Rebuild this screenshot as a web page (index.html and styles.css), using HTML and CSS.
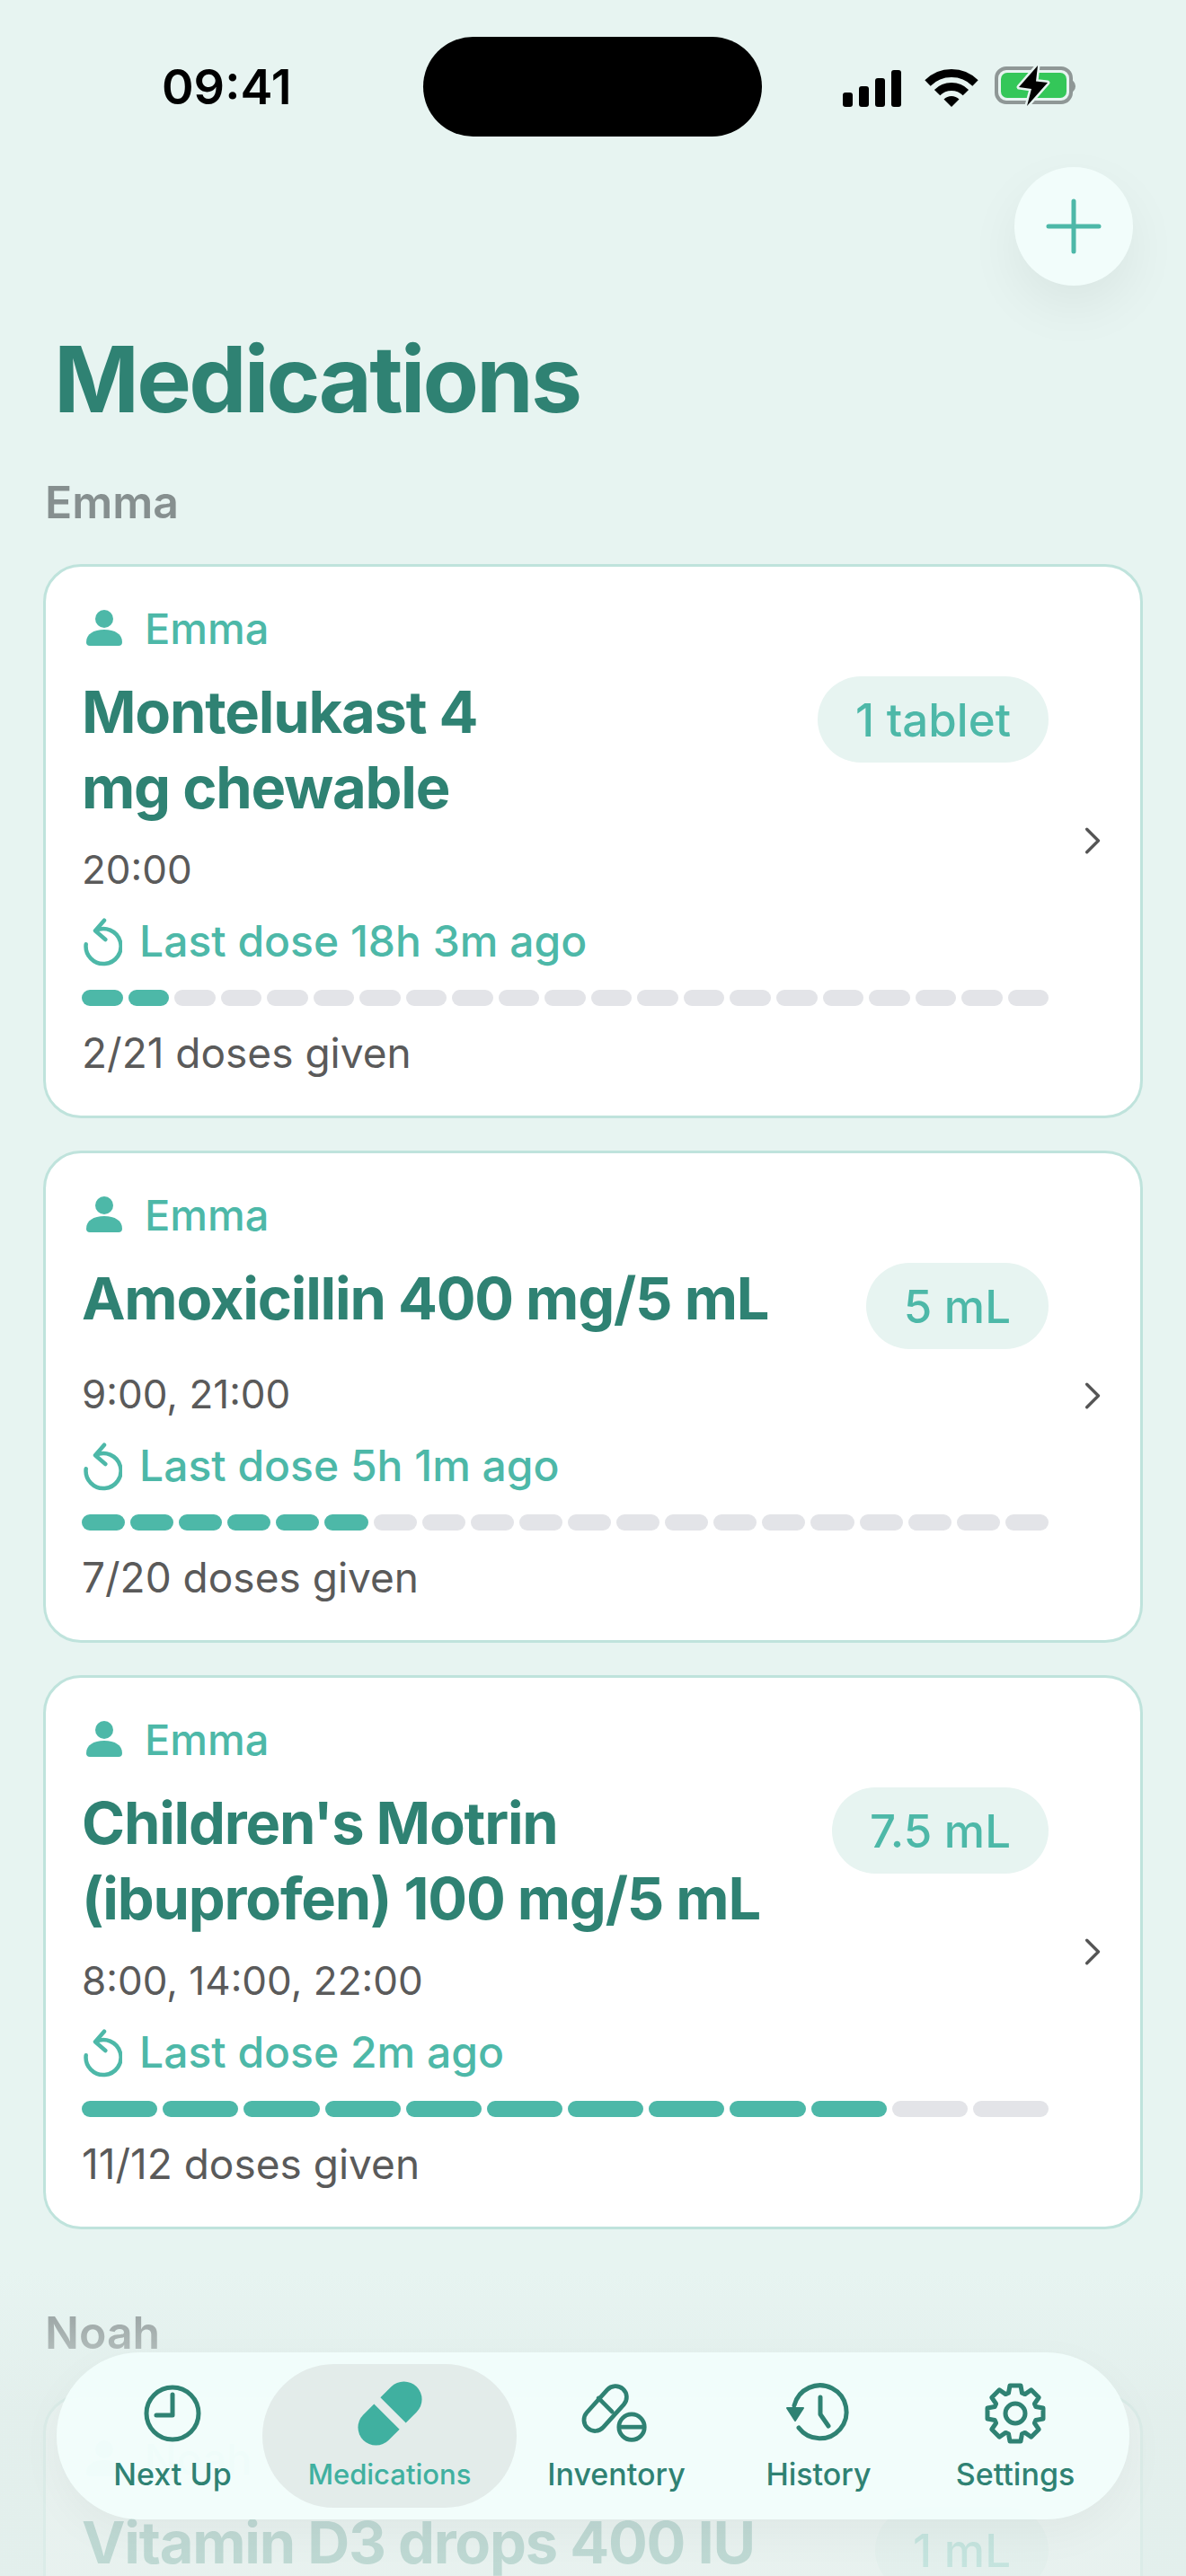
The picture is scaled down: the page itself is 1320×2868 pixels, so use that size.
FILE: index.html
```html
<!DOCTYPE html>
<html lang="en">
  <head>
    <meta charset="UTF-8" />
    <meta name="viewport" content="width=device-width, initial-scale=1.0" />
    <title>Medications</title>
    <link rel="stylesheet" href="styles.css">
  </head>

  <body>
    <div class="screen">
      <!-- Status Bar -->
      <div class="status-bar">
        <div class="status-time">09:41</div>
        <div class="island"></div>
        <div class="status-icons">
          <svg class="icon-signal" viewBox="0 0 65 41">
            <rect x="0" y="25" width="11" height="16" rx="3" />
            <rect x="18" y="18" width="11" height="23" rx="3" />
            <rect x="36" y="9" width="11" height="32" rx="3" />
            <rect x="54" y="0" width="11" height="41" rx="3" />
          </svg>
          <svg class="icon-wifi" viewBox="0 0 66 47">
            <path d="M6.5 20.5A37.5 37.5 0 0 1 59.5 20.5" fill="none" stroke="#000" stroke-width="9" />
            <path d="M17.1 31.1A22.5 22.5 0 0 1 48.9 31.1" fill="none" stroke="#000" stroke-width="9" />
            <path d="M33 47L24.5 38.5A12 12 0 0 1 41.5 38.5Z" fill="#000" />
          </svg>
          <svg class="icon-battery" viewBox="0 0 100 52">
            <rect x="8" y="7" width="83" height="38" rx="11" fill="none" stroke="#8f9796" stroke-width="4" />
            <rect x="13" y="12" width="73" height="28" rx="7" fill="#34c759" />
            <path d="M93 23a6 6 0 0 1 0 8z" fill="#8f9796" stroke="#8f9796" stroke-width="3" />
            <path d="M54 4L33 28L47 30L42 49L65 23L52 21.5Z" fill="#000" stroke="#e7f4f1" stroke-width="5" paint-order="stroke" stroke-linejoin="round" />
          </svg>
        </div>
      </div>

      <!-- Add Button -->
      <div class="add-row">
        <div class="add-button">
          <svg viewBox="0 0 56 56" class="icon-plus">
            <path d="M28 0V56M0 28H56" stroke="#4db8a8" stroke-width="5" stroke-linecap="round" />
          </svg>
        </div>
      </div>

      <h1 class="page-title">Medications</h1>

      <!-- Emma -->
      <div class="section-name">Emma</div>
      <div class="card-list">
        <div class="card">
          <div class="card-body">
            <div class="person">
              <svg class="icon-person" viewBox="0 0 40 40"><circle cx="20" cy="10" r="10" /><path d="M0 36C0 27 8 22 20 22S40 27 40 36C40 38.500 38.500 40 36 40H4C1.500 40 0 38.500 0 36Z" /></svg>
              <span>Emma</span>
            </div>
            <div class="med-row">
              <div class="med-name med-name-narrow">Montelukast 4 mg chewable</div>
              <div class="dose-pill">1 tablet</div>
            </div>
            <div class="schedule">20:00</div>
            <div class="last-dose">
              <svg class="icon-last" viewBox="0 0 46 58"><path d="M16 18.300A19.500 19.500 0 1 1 5.700 33.300M26 6.700L16 18.300L27.300 28" /></svg>
              <span>Last dose 18h 3m ago</span>
            </div>
            <div class="progress">
              <i class="seg on"></i><i class="seg on"></i><i class="seg"></i><i class="seg"></i><i class="seg"></i><i class="seg"></i><i class="seg"></i>
              <i class="seg"></i><i class="seg"></i><i class="seg"></i><i class="seg"></i><i class="seg"></i><i class="seg"></i><i class="seg"></i>
              <i class="seg"></i><i class="seg"></i><i class="seg"></i><i class="seg"></i><i class="seg"></i><i class="seg"></i><i class="seg"></i>
            </div>
            <div class="doses-given">2/21 doses given</div>
          </div>
          <svg class="chevron" viewBox="0 0 20 34"><path d="M2 2L17 17L2 32" /></svg>
        </div>

        <div class="card">
          <div class="card-body">
            <div class="person">
              <svg class="icon-person" viewBox="0 0 40 40"><circle cx="20" cy="10" r="10" /><path d="M0 36C0 27 8 22 20 22S40 27 40 36C40 38.500 38.500 40 36 40H4C1.500 40 0 38.500 0 36Z" /></svg>
              <span>Emma</span>
            </div>
            <div class="med-row">
              <div class="med-name">Amoxicillin 400 mg/5 mL</div>
              <div class="dose-pill">5 mL</div>
            </div>
            <div class="schedule">9:00, 21:00</div>
            <div class="last-dose">
              <svg class="icon-last" viewBox="0 0 46 58"><path d="M16 18.300A19.500 19.500 0 1 1 5.700 33.300M26 6.700L16 18.300L27.300 28" /></svg>
              <span>Last dose 5h 1m ago</span>
            </div>
            <div class="progress">
              <i class="seg on"></i><i class="seg on"></i><i class="seg on"></i><i class="seg on"></i><i class="seg on"></i><i class="seg on"></i><i class="seg"></i>
              <i class="seg"></i><i class="seg"></i><i class="seg"></i><i class="seg"></i><i class="seg"></i><i class="seg"></i><i class="seg"></i>
              <i class="seg"></i><i class="seg"></i><i class="seg"></i><i class="seg"></i><i class="seg"></i><i class="seg"></i>
            </div>
            <div class="doses-given">7/20 doses given</div>
          </div>
          <svg class="chevron" viewBox="0 0 20 34"><path d="M2 2L17 17L2 32" /></svg>
        </div>

        <div class="card">
          <div class="card-body">
            <div class="person">
              <svg class="icon-person" viewBox="0 0 40 40"><circle cx="20" cy="10" r="10" /><path d="M0 36C0 27 8 22 20 22S40 27 40 36C40 38.500 38.500 40 36 40H4C1.500 40 0 38.500 0 36Z" /></svg>
              <span>Emma</span>
            </div>
            <div class="med-row">
              <div class="med-name">Children's Motrin (ibuprofen) 100 mg/5 mL</div>
              <div class="dose-pill">7.5 mL</div>
            </div>
            <div class="schedule">8:00, 14:00, 22:00</div>
            <div class="last-dose">
              <svg class="icon-last" viewBox="0 0 46 58"><path d="M16 18.300A19.500 19.500 0 1 1 5.700 33.300M26 6.700L16 18.300L27.300 28" /></svg>
              <span>Last dose 2m ago</span>
            </div>
            <div class="progress">
              <i class="seg on"></i><i class="seg on"></i><i class="seg on"></i><i class="seg on"></i><i class="seg on"></i><i class="seg on"></i>
              <i class="seg on"></i><i class="seg on"></i><i class="seg on"></i><i class="seg on"></i><i class="seg"></i><i class="seg"></i>
            </div>
            <div class="doses-given">11/12 doses given</div>
          </div>
          <svg class="chevron" viewBox="0 0 20 34"><path d="M2 2L17 17L2 32" /></svg>
        </div>
      </div>

      <!-- Noah -->
      <div class="section-name section-noah">Noah</div>
      <div class="card-list">
        <div class="card">
          <div class="card-body">
            <div class="person">
              <svg class="icon-person" viewBox="0 0 40 40"><circle cx="20" cy="10" r="10" /><path d="M0 36C0 27 8 22 20 22S40 27 40 36C40 38.500 38.500 40 36 40H4C1.500 40 0 38.500 0 36Z" /></svg>
              <span>Noah</span>
            </div>
            <div class="med-row">
              <div class="med-name">Vitamin D3 drops 400 IU</div>
              <div class="dose-pill">1 mL</div>
            </div>
          </div>
        </div>
      </div>

      <!-- Fade under the tab bar -->
      <div class="bottom-fade"></div>

      <!-- Tab Bar -->
      <div class="tab-bar">
        <div class="tab">
          <svg class="tab-icon" viewBox="0 0 72 72">
            <circle cx="36" cy="36" r="29" fill="none" stroke="#2f8273" stroke-width="5" />
            <path d="M36 15V38H18" fill="none" stroke="#2f8273" stroke-width="5" stroke-linecap="round" stroke-linejoin="round" />
          </svg>
          <span>Next Up</span>
        </div>
        <div class="tab tab-active">
          <svg class="tab-icon" viewBox="0 0 72 72">
            <g transform="rotate(45 36 36)">
              <path d="M16 15a20 20 0 0 1 40 0V32H16Z" transform="translate(0 -1)" fill="#40b0a0" />
              <path d="M16 40H56V57a20 20 0 0 1 -40 0Z" transform="translate(0 1)" fill="#40b0a0" />
            </g>
          </svg>
          <span class="tab-active-label">Medications</span>
        </div>
        <div class="tab">
          <svg class="tab-icon" viewBox="0 0 76 72">
            <g fill="none" stroke="#2f8273" stroke-width="5">
              <rect x="17" y="0" width="26" height="62" rx="13" transform="rotate(42 27 28) translate(-3 0)" />
              <path d="M17 18L33 34" stroke-linecap="round" />
              <circle cx="56" cy="52" r="15" />
              <path d="M41 52H71" />
            </g>
          </svg>
          <span>Inventory</span>
        </div>
        <div class="tab">
          <svg class="tab-icon" viewBox="0 0 72 72">
            <path d="M9 27A29.500 29.500 0 1 1 14 52" fill="none" stroke="#2f8273" stroke-width="5" stroke-linecap="round" />
            <path d="M1 30H19L10 44Z" fill="#2f8273" stroke="#2f8273" stroke-width="2" stroke-linejoin="round" />
            <path d="M38 18V37L47 50" fill="none" stroke="#2f8273" stroke-width="5" stroke-linecap="round" stroke-linejoin="round" />
          </svg>
          <span>History</span>
        </div>
        <div class="tab">
          <svg class="tab-icon" viewBox="-36 -36 72 72">
            <polygon points="-7.500,-22.800 -6,-31 6,-31 7.500,-22.800 10.800,-21.400 17.700,-26.200 26.200,-17.700 21.400,-10.800 22.800,-7.500 31,-6 31,6 22.800,7.500 21.400,10.800 26.200,17.700 17.700,26.200 10.800,21.400 7.500,22.800 6,31 -6,31 -7.500,22.800 -10.800,21.400 -17.700,26.200 -26.200,17.700 -21.400,10.800 -22.800,7.500 -31,6 -31,-6 -22.800,-7.500 -21.400,-10.800 -26.200,-17.700 -17.700,-26.200 -10.800,-21.400" fill="none" stroke="#2f8273" stroke-width="5" stroke-linejoin="round" />
            <circle cx="0" cy="0" r="11" fill="none" stroke="#2f8273" stroke-width="5" />
          </svg>
          <span>Settings</span>
        </div>
      </div>
    </div>
  </body>
</html>
```

FILE: styles.css
```css
body,
html {
  margin: 0;
  padding: 0;
  width: 100%;
  height: 100%;
  font-family: "Inter", "Noto Sans", sans-serif;
}

.screen {
  position: relative;
  height: 2868px;
  overflow: hidden;
  background-color: #e7f4f1;
}

/* Status Bar */
.status-bar {
  height: 152px;
  box-sizing: border-box;
  padding: 41px 0 0 180px;
  display: flex;
  align-items: flex-start;
}

.status-time {
  width: 291px;
  margin-top: 23px;
  font-size: 54px;
  line-height: 66px;
  font-weight: 600;
  color: #000000;
}

.island {
  width: 377px;
  height: 111px;
  border-radius: 56px;
  background-color: #000000;
}

.status-icons {
  margin-left: 90px;
  margin-top: 31px;
  display: flex;
  align-items: flex-start;
}

.icon-signal {
  width: 65px;
  height: 41px;
  margin-top: 6px;
  margin-right: 23px;
}

.icon-wifi {
  width: 66px;
  height: 47px;
  margin-top: 0;
}

.icon-battery {
  width: 100px;
  height: 52px;
  margin-left: 9px;
  margin-top: -3px;
}

/* Add Button */
.add-row {
  display: flex;
  justify-content: flex-end;
  padding: 34px 59px 0 0;
}

.add-button {
  width: 132px;
  height: 132px;
  border-radius: 50%;
  background-color: #f2fdfb;
  box-shadow: 0 24px 60px rgba(0, 0, 0, 0.06);
  display: flex;
  align-items: center;
  justify-content: center;
}

.icon-plus {
  width: 56px;
  height: 56px;
  overflow: visible;
}

.page-title {
  margin: 38px 0 0 60px;
  font-size: 102px;
  line-height: 132px;
  font-weight: 700;
  letter-spacing: -2.8px;
  color: #2f8273;
}

.section-name {
  margin: 41px 0 0 50px;
  font-size: 50px;
  line-height: 60px;
  font-weight: 600;
  color: #868f8f;
}

.section-noah {
  margin-top: 85px;
}

/* Cards */
.card-list {
  margin: 39px 48px 0;
  display: flex;
  flex-direction: column;
  gap: 36px;
}

.card {
  box-sizing: border-box;
  display: flex;
  align-items: center;
  padding: 38px 44px 40px 40px;
  background-color: #ffffff;
  border: 3px solid #bfe3dc;
  border-radius: 42px;
}

.card-body {
  width: 1076px;
  flex: none;
}

.person {
  display: flex;
  align-items: center;
  gap: 25px;
  height: 60px;
  padding-left: 5px;
  font-size: 47px;
  font-weight: 500;
  color: #4db8a8;
}

.icon-person {
  width: 40px;
  height: 40px;
  fill: #4db8a8;
}

.med-row {
  margin-top: 22px;
  display: flex;
  justify-content: space-between;
  align-items: flex-start;
}

.med-name {
  max-width: 800px;
  font-size: 65px;
  line-height: 84px;
  font-weight: 700;
  letter-spacing: -1.2px;
  color: #2f8273;
}

.med-name-narrow {
  max-width: 500px;
}

.dose-pill {
  height: 96px;
  margin: 2px 0 1px;
  padding: 0 42px;
  display: flex;
  align-items: center;
  border-radius: 48px;
  background-color: #e7f4f1;
  font-size: 51px;
  font-weight: 500;
  color: #4db8a8;
}

.schedule {
  margin-top: 22px;
  font-size: 44px;
  line-height: 54px;
  color: #5a5a5a;
}

.last-dose {
  margin-top: 22px;
  display: flex;
  align-items: center;
  gap: 19px;
  height: 60px;
  font-size: 48px;
  font-weight: 500;
  color: #4db8a8;
}

.icon-last {
  width: 46px;
  height: 58px;
  margin-left: -1px;
  flex: none;
  fill: none;
  stroke: #4db8a8;
  stroke-width: 4.5;
  stroke-linecap: round;
  stroke-linejoin: round;
}

.progress {
  margin-top: 25px;
  display: flex;
  gap: 6px;
}

.seg {
  flex: 1;
  height: 18px;
  border-radius: 9px;
  background-color: #e3e4e8;
}

.seg.on {
  background-color: #4db8a8;
}

.doses-given {
  margin-top: 22px;
  font-size: 46px;
  line-height: 60px;
  color: #5a5a5a;
}

.chevron {
  width: 20px;
  height: 34px;
  margin-left: 41px;
  fill: none;
  stroke: #555555;
  stroke-width: 4;
  stroke-linecap: round;
  stroke-linejoin: round;
}

/* Fade under the tab bar */
.bottom-fade {
  position: absolute;
  left: 0;
  right: 0;
  bottom: 0;
  height: 340px;
  background: linear-gradient(180deg, rgba(226, 238, 235, 0) 0%, rgba(226, 238, 235, 0.8) 45%, rgba(226, 238, 235, 0.8) 100%);
}

/* Tab Bar */
.tab-bar {
  position: absolute;
  left: 63px;
  top: 2619px;
  width: 1194px;
  height: 186px;
  box-sizing: border-box;
  padding: 13px 0 13px 29px;
  display: grid;
  grid-template-columns: 200px 283px 222px 228px 210px;
  border-radius: 93px;
  background-color: rgba(242, 254, 252, 0.93);
  box-shadow: 0 16px 50px rgba(0, 0, 0, 0.04);
}

.tab {
  display: flex;
  flex-direction: column;
  align-items: center;
  padding-top: 19px;
  border-radius: 80px;
  font-size: 34px;
  line-height: 42px;
  font-weight: 500;
  color: #2f8273;
}

.tab-icon {
  width: 72px;
  height: 72px;
  margin-bottom: 11px;
  overflow: visible;
}

.tab-active {
  background-color: #e3ecea;
  color: #40b0a0;
}

.tab-active-label {
  font-size: 31px;
}
```
